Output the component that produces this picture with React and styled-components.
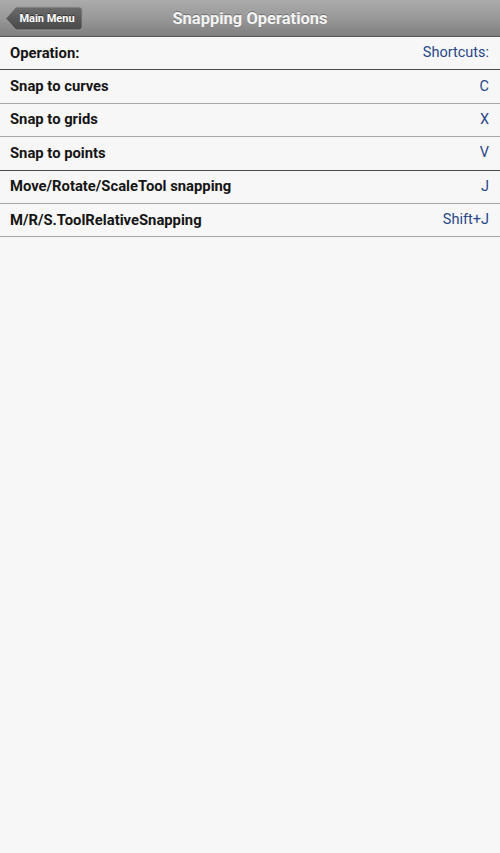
import React from "react";
import styled, { createGlobalStyle } from "styled-components";

const GlobalStyle = createGlobalStyle`
  html, body {
    margin: 0;
    padding: 0;
    background: #f7f7f7;
    font-family: Roboto, "Liberation Sans", Arial, sans-serif;
  }
`;

const Page = styled.div`
  width: 500px;
  min-height: 853px;
  background: #f7f7f7;
`;

const TitleBar = styled.div`
  position: relative;
  height: 36px;
  display: flex;
  align-items: center;
  justify-content: center;
  background: linear-gradient(#ababab, #999999 50%, #7e7e7e);
  border-bottom: 1px solid #555555;
`;

const Title = styled.h1`
  margin: 0;
  font-size: 16.5px;
  font-weight: bold;
  color: #f4f4f4;
  text-shadow: 0 -1px 0 rgba(0, 0, 0, 0.3);
`;

const BackButton = styled.button`
  position: absolute;
  left: 5px;
  top: 6px;
  height: 25px;
  width: 78px;
  padding: 0 0 0 6px;
  border: none;
  background: transparent;
  font-family: Roboto, "Liberation Sans", Arial, sans-serif;
  font-size: 11px;
  font-weight: bold;
  color: #ffffff;
  text-shadow: 0 -1px 0 rgba(0, 0, 0, 0.5);
  display: flex;
  align-items: center;
  justify-content: center;
  z-index: 0;

  svg {
    position: absolute;
    left: 0;
    top: 0;
    z-index: -1;
  }
`;

const List = styled.div`
  display: flex;
  flex-direction: column;
`;

const Row = styled.div`
  box-sizing: border-box;
  height: 33.4px;
  display: flex;
  align-items: center;
  justify-content: space-between;
  padding: 0 11px 1px 10px;
  border-bottom: 1px solid ${(p) => (p.$dark ? "#4a4a4a" : "#a8a8a8")};
`;

const Label = styled.span`
  font-size: 14.8px;
  font-weight: bold;
  color: #151515;
`;

const Shortcut = styled.span`
  font-size: 14.5px;
  color: #27478a;
`;

const rows = [
  { op: "Operation:", key: "Shortcuts:", dark: true },
  { op: "Snap to curves", key: "C" },
  { op: "Snap to grids", key: "X" },
  { op: "Snap to points", key: "V", dark: true },
  { op: "Move/Rotate/ScaleTool snapping", key: "J" },
  { op: "M/R/S.ToolRelativeSnapping", key: "Shift+J" },
];

const App = () => {
  return (
    <>
      <GlobalStyle />
      <Page>
        <TitleBar>
          <BackButton>
            <svg width="78" height="25" viewBox="0 0 78 25">
              <defs>
                <linearGradient id="bb" x1="0" y1="0" x2="0" y2="1">
                  <stop offset="0" stopColor="#6c6c6c" />
                  <stop offset="1" stopColor="#474747" />
                </linearGradient>
              </defs>
              <path
                d="M0.8 12.5 L11 1 H74 Q77.2 1 77.2 4.2 V20.8 Q77.2 24 74 24 H11 Z"
                fill="url(#bb)"
                stroke="#9a9a9a"
              />
            </svg>
            Main Menu
          </BackButton>
          <Title>Snapping Operations</Title>
        </TitleBar>
        <List>
          {rows.map((r) => (
            <Row key={r.op} $dark={r.dark}>
              <Label>{r.op}</Label>
              <Shortcut>{r.key}</Shortcut>
            </Row>
          ))}
        </List>
      </Page>
    </>
  );
};

export default App;
